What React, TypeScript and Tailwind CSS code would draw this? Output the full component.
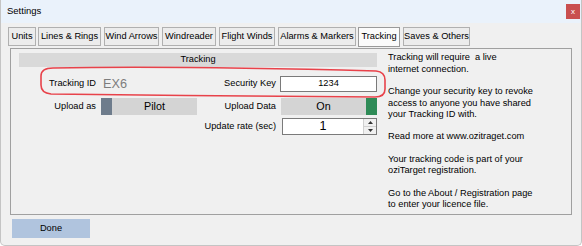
import type { ReactNode } from 'react';

const tabs = [
  { label: 'Units', cls: 'w-[28px]' },
  { label: 'Lines & Rings', cls: 'ml-[2px] w-[63px]' },
  { label: 'Wind Arrows', cls: 'ml-[3px] w-[55px]' },
  { label: 'Windreader', cls: 'ml-[3px] w-[54px]' },
  { label: 'Flight Winds', cls: 'ml-[3px] w-[56px]' },
  { label: 'Alarms & Markers', cls: 'ml-[3px] w-[78px]' },
  { label: 'Tracking', cls: 'ml-[2px] w-[42px]', active: true },
  { label: 'Saves & Others', cls: 'ml-[3px] w-[67px]' },
];

const helpLines = [
  'Tracking will require  a live',
  'internet connection.',
  '',
  'Change your security key to revoke',
  'access to anyone you have shared',
  'your Tracking ID with.',
  '',
  'Read more at www.ozitraget.com',
  '',
  'Your tracking code is part of your',
  'oziTarget registration.',
  '',
  'Go to the About / Registration page',
  'to enter your licence file.',
];

function Label({ children, className = '' }: { children: ReactNode; className?: string }) {
  return <div className={`text-right whitespace-nowrap ${className}`}>{children}</div>;
}

export default function App() {
  return (
    <div
      className="relative w-[582px] h-[246px] overflow-hidden bg-[#f0f0f0] border-x border-b border-[#c4c4c4] rounded-b-[5px] text-[9.25px] text-black"
      style={{ fontFamily: '"Liberation Sans", Arial, sans-serif' }}
    >
      {/* title bar */}
      <div className="h-[23px] bg-[#eaf2fb] flex items-center pl-[6px] text-[9.5px]">
        <span>Settings</span>
        <div className="ml-auto mr-[1px] w-[14px] h-[15px] bg-[#c94f4f] flex items-center justify-center text-white text-[8px] leading-none">
          x
        </div>
      </div>

      {/* tabs */}
      <div className="mt-[4px] pl-[7px] flex items-start h-[21px]">
        {tabs.map((t) => (
          <div
            key={t.label}
            className={`${t.cls} flex items-center justify-center whitespace-nowrap border ${
              t.active
                ? 'h-[20px] bg-[#fbfbfb] border-[#9a9a9a]'
                : 'h-[19px] bg-[#ececec] border-[#b0b0b0]'
            }`}
          >
            {t.label}
          </div>
        ))}
      </div>

      {/* tab panel */}
      <div className="ml-[9px] w-[562px] h-[167px] border border-[#a0a0a0] pt-[4px] pl-[8px] flex">
        <div className="w-[358px]">
          <div className="h-[14px] bg-[#d9d9d9] flex items-center justify-center">Tracking</div>

          <div className="mt-[9px] h-[16px] flex items-center">
            <Label className="w-[77px]">Tracking ID</Label>
            <div className="ml-[7px] w-[94px] text-[12.7px] text-[#7d7d7d] leading-none">EX6</div>
            <Label className="w-[79px]">Security Key</Label>
            <div className="ml-[4px] w-[97px] h-[16px] bg-white border border-[#7a7a7a] flex items-center justify-center">
              1234
            </div>
          </div>

          <div className="mt-[6px] h-[17px] flex items-center">
            <Label className="w-[77px]">Upload as</Label>
            <div className="ml-[5px] w-[11px] h-[17px] bg-[#6e7c8c]" />
            <div className="w-[85px] h-[17px] bg-[#d4d4d4] flex items-center justify-center text-[10.75px]">
              Pilot
            </div>
            <Label className="w-[79px]">Upload Data</Label>
            <div className="ml-[5px] w-[85px] h-[17px] bg-[#d4d4d4] flex items-center justify-center text-[10.75px]">
              On
            </div>
            <div className="w-[11px] h-[17px] bg-[#2e8b57]" />
          </div>

          <div className="mt-[3px] h-[17px] flex items-center">
            <div className="w-[178px]" />
            <Label className="w-[79px]">Update rate (sec)</Label>
            <div className="ml-[6px] w-[95px] h-[17px] bg-white border border-[#7a7a7a] flex">
              <div className="flex-1 flex items-center justify-center text-[12.5px] leading-none">1</div>
              <div className="w-[13px] flex flex-col bg-[#f0f0f0] border-l border-[#d0d0d0]">
                <div className="flex-1 flex items-center justify-center border-b border-[#d0d0d0]">
                  <svg width="5" height="3" viewBox="0 0 5 3">
                    <path d="M0 3 L2.5 0 L5 3 Z" fill="#333" />
                  </svg>
                </div>
                <div className="flex-1 flex items-center justify-center">
                  <svg width="5" height="3" viewBox="0 0 5 3">
                    <path d="M0 0 L2.5 3 L5 0 Z" fill="#333" />
                  </svg>
                </div>
              </div>
            </div>
          </div>
        </div>

        <div className="ml-[11px] w-[170px] leading-[11.3px] -mt-[0.7px]">
          {helpLines.map((l, i) => (
            <div key={i} className="h-[11.3px] whitespace-pre">
              {l}
            </div>
          ))}
        </div>
      </div>

      {/* footer */}
      <div className="mt-[4px] ml-[11px] w-[78px] h-[19px] bg-[#b0c4de] flex items-center justify-center">
        Done
      </div>

      {/* red hand-drawn annotation */}
      <svg className="absolute inset-0 pointer-events-none" width="582" height="246">
        <path
          d="M52 68 C150 66 300 69 375 71 Q384 72 384 80 L384 89 Q384 97 374 97 C300 97 150 95 50 94 Q40 93 40 85 L40 76 Q40 68 52 68 Z"
          fill="none"
          stroke="#e8424a"
          strokeWidth="1.6"
        />
      </svg>
    </div>
  );
}
